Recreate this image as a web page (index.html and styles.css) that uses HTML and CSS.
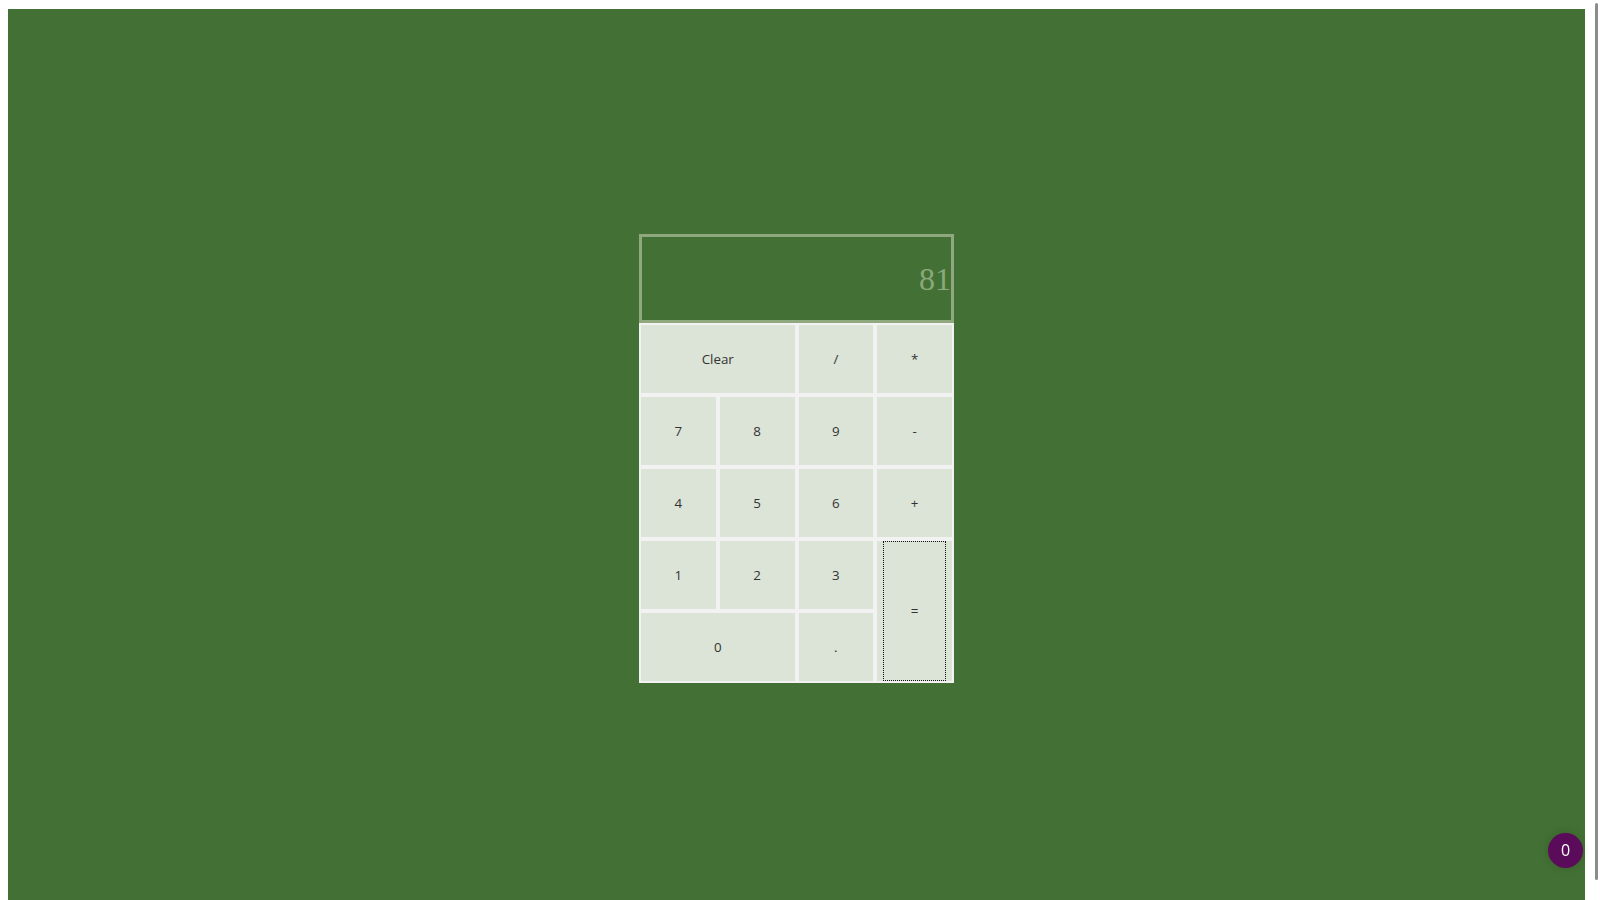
FILE: index.html
```html
<!DOCTYPE html>
<html>
<head>
<meta charset="utf-8">
<title>Calculator</title>
<link rel="stylesheet" href="styles.css">
</head>
<body>
<div class="app">
  <div class="calculator">
    <div class="display">81</div>
    <div class="keys">
      <button class="key wide">Clear</button>
      <button class="key">/</button>
      <button class="key">*</button>
      <button class="key">7</button>
      <button class="key">8</button>
      <button class="key">9</button>
      <button class="key">-</button>
      <button class="key">4</button>
      <button class="key">5</button>
      <button class="key">6</button>
      <button class="key">+</button>
      <button class="key">1</button>
      <button class="key">2</button>
      <button class="key">3</button>
      <button class="key tall focused">=</button>
      <button class="key wide">0</button>
      <button class="key">.</button>
    </div>
  </div>
</div>
<div class="badge">0</div>
<div class="scroll-thumb"></div>
</body>
</html>
```
FILE: styles.css
```css
html {
  overflow-x: hidden;
}
body {
  margin: 9px 15px 8px 8px;
  font-family: "Open Sans", "Liberation Sans", sans-serif;
}
.app {
  height: 100vh;
  background: #437034;
  display: flex;
  align-items: center;
  justify-content: center;
}
.calculator {
  width: 315px;
  padding-bottom: 1px;
}
.display {
  box-sizing: border-box;
  height: 89px;
  border: 3px solid #8fa87d;
  padding-top: 26px;
  text-align: right;
  font-family: "Liberation Serif", serif;
  font-size: 32px;
  line-height: 32px;
  color: #8aa97a;
}
.keys {
  display: grid;
  grid-template-columns: repeat(4, 1fr);
  grid-auto-rows: 68px;
  gap: 4px;
  padding: 2px;
  background: #f2f2f2;
}
.key {
  position: relative;
  border: 0;
  margin: 0;
  padding: 0;
  background: #dce3d7;
  color: #333;
  font-family: "Open Sans", "Liberation Sans", sans-serif;
  font-size: 13.333px;
}
.wide {
  grid-column: span 2;
}
.tall {
  grid-row: span 2;
}
.focused::after {
  content: "";
  position: absolute;
  top: 0;
  bottom: 0;
  left: 6px;
  right: 6px;
  border: 1px dotted #111;
}
.badge {
  position: fixed;
  right: 17px;
  bottom: 32px;
  width: 35px;
  height: 35px;
  border-radius: 50%;
  background: #5a0b5a;
  color: #fff;
  font-size: 16px;
  line-height: 35px;
  text-align: center;
  box-shadow: 0 0 8px rgba(0, 0, 0, 0.15);
}
.scroll-thumb {
  position: fixed;
  top: 3px;
  right: 2px;
  width: 3px;
  height: 877px;
  border-radius: 2px;
  background: #8c8c8c;
}
```
